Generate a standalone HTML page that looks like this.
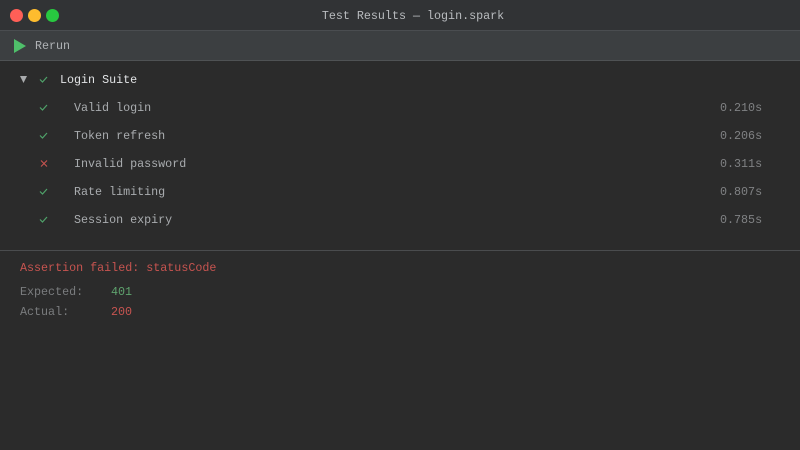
<!DOCTYPE html><html><head><style>
body{margin:0;width:800px;height:450px;background:#2b2b2b;font-family:"Liberation Mono",monospace;font-size:11.7px;overflow:hidden;position:relative}
.t{position:absolute;white-space:pre;line-height:14px}
.c{position:absolute;left:39px}
</style></head><body>
<div style="position:absolute;left:0;top:0;width:800px;height:30px;background:#313335"></div>
<div style="position:absolute;left:0;top:30px;width:800px;height:1px;background:#4a4d50"></div>
<div style="position:absolute;left:0;top:31px;width:800px;height:29px;background:#3c3f41"></div>
<div style="position:absolute;left:0;top:60px;width:800px;height:1px;background:#4f5254"></div>
<div style="position:absolute;left:10px;top:9px;width:13px;height:13px;border-radius:50%;background:#ff5f57"></div>
<div style="position:absolute;left:28px;top:9px;width:13px;height:13px;border-radius:50%;background:#febc2e"></div>
<div style="position:absolute;left:46px;top:9px;width:13px;height:13px;border-radius:50%;background:#28c840"></div>
<div class="t" style="left:0;width:826px;text-align:center;top:9px;color:#b9bcbf">Test Results — login.spark</div>
<svg style="position:absolute;left:14px;top:39px" width="13" height="14"><path d="M0 0L12 7L0 14Z" fill="#4fbf6a"/></svg>
<div class="t" style="left:35px;top:39px;color:#b0b3b6">Rerun</div>
<svg style="position:absolute;left:20px;top:76px" width="8" height="7"><path d="M0 0H7L3.5 7Z" fill="#a9abad"/></svg>
<svg class="c" style="top:76px" width="9" height="7"><path d="M1 3.5L3.5 6L8 1" stroke="#4fa36a" stroke-width="1.2" fill="none"/></svg>
<div class="t" style="left:60px;top:73px;color:#e2e4e6">Login Suite</div>
<svg class="c" style="top:104px" width="9" height="7"><path d="M1 3.5L3.5 6L8 1" stroke="#4fa36a" stroke-width="1.2" fill="none"/></svg><div class="t" style="left:74px;top:101px;color:#a9acaf">Valid login</div><div class="t" style="left:720px;top:101px;color:#808284">0.210s</div>
<svg class="c" style="top:132px" width="9" height="7"><path d="M1 3.5L3.5 6L8 1" stroke="#4fa36a" stroke-width="1.2" fill="none"/></svg><div class="t" style="left:74px;top:129px;color:#a9acaf">Token refresh</div><div class="t" style="left:720px;top:129px;color:#808284">0.206s</div>
<svg class="c" style="top:160px" width="9" height="7"><path d="M2 0.5L8 6.5M8 0.5L2 6.5" stroke="#c75450" stroke-width="1.1" fill="none"/></svg><div class="t" style="left:74px;top:157px;color:#a9acaf">Invalid password</div><div class="t" style="left:720px;top:157px;color:#808284">0.311s</div>
<svg class="c" style="top:188px" width="9" height="7"><path d="M1 3.5L3.5 6L8 1" stroke="#4fa36a" stroke-width="1.2" fill="none"/></svg><div class="t" style="left:74px;top:185px;color:#a9acaf">Rate limiting</div><div class="t" style="left:720px;top:185px;color:#808284">0.807s</div>
<svg class="c" style="top:216px" width="9" height="7"><path d="M1 3.5L3.5 6L8 1" stroke="#4fa36a" stroke-width="1.2" fill="none"/></svg><div class="t" style="left:74px;top:213px;color:#a9acaf">Session expiry</div><div class="t" style="left:720px;top:213px;color:#808284">0.785s</div>
<div style="position:absolute;left:0;top:250px;width:800px;height:1px;background:#4a4c4e"></div>
<div class="t" style="left:20px;top:261px;color:#c75450">Assertion failed: statusCode</div>
<div class="t" style="left:20px;top:285px;color:#7a7c7e">Expected:</div><div class="t" style="left:111px;top:285px;color:#5fa36e">401</div>
<div class="t" style="left:20px;top:305px;color:#7a7c7e">Actual:</div><div class="t" style="left:111px;top:305px;color:#c75450">200</div>
</body></html>
